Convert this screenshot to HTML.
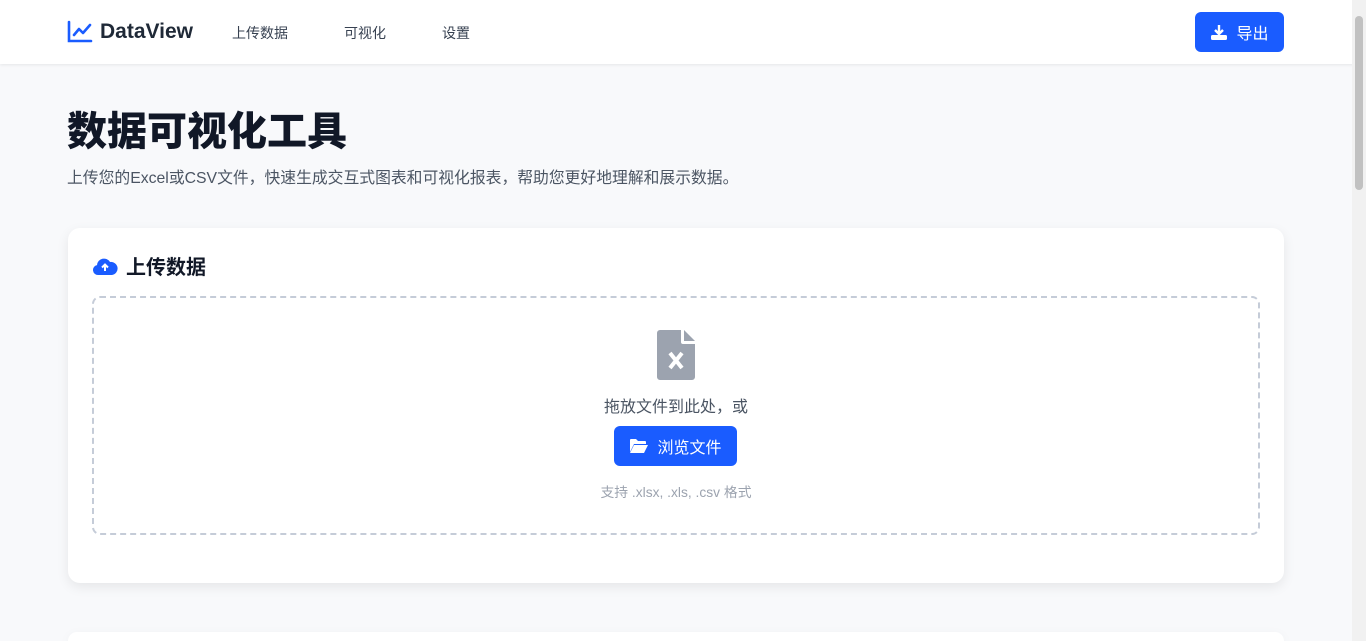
<!DOCTYPE html>
<html><head><meta charset="utf-8"><style>
*{box-sizing:border-box;margin:0;padding:0}
html,body{width:1366px;height:641px;overflow:hidden}
body{background:#f8f9fb;font-family:"Liberation Sans","Noto Sans CJK SC",sans-serif;color:#1f2937;position:relative}
.nav{position:absolute;left:0;top:0;width:1354px;height:64px;background:#fff;box-shadow:0 1px 3px rgba(0,0,0,.08)}
.logo{position:absolute;left:67px;top:20px;display:flex;align-items:center;font-weight:bold;font-size:21px;color:#1f2937}
.nav a{position:absolute;top:23px;font-size:14px;color:#374151}
.exp{position:absolute;left:1195px;top:12px;width:89px;height:40px;background:#1a5cff;border-radius:6px;color:#fff;font-size:16px;display:flex;align-items:center;justify-content:center;gap:8px}
h1{position:absolute;left:67px;top:99px;font-size:40px;font-weight:900;color:#111827}
.sub{position:absolute;left:67px;top:165px;font-size:15.8px;color:#4b5563;white-space:nowrap}
.card{position:absolute;left:68px;top:228px;width:1216px;height:355px;background:#fff;border-radius:12px;box-shadow:0 4px 12px rgba(0,0,0,.08)}
.card2{position:absolute;left:68px;top:632px;width:1216px;height:9px;background:#fff;border-radius:12px 12px 0 0;box-shadow:0 4px 12px rgba(0,0,0,.06)}
.ct{position:absolute;left:24px;top:23px;font-size:20px;font-weight:bold;display:flex;align-items:center;gap:8px;color:#111827}
.drop{position:absolute;left:24px;top:68px;width:1168px;height:239px;border:2px dashed #c5ccd8;border-radius:8px;text-align:center}
.btn{position:absolute;left:520px;top:128px;width:123px;height:40px;background:#1a5cff;border-radius:6px;color:#fff;font-size:16px;display:flex;align-items:center;justify-content:center;gap:8px}
.sb{position:absolute;right:3px;top:16px;width:8px;height:174px;background:#c1c1c1;border-radius:4px}
.sbt{position:absolute;right:0;top:0;width:14px;height:641px;background:#f1f1f1}
</style></head><body>
<div class="nav">
<div class="logo"><svg width="26" height="24" viewBox="0 0 26 24" style="margin-right:7px"><path d="M2 2V21H24" fill="none" stroke="#1a5cff" stroke-width="2.6" stroke-linecap="round"/><path d="M7 15l5-6 4 4 7-8" fill="none" stroke="#1a5cff" stroke-width="2.6" stroke-linecap="round" stroke-linejoin="round"/></svg>DataView</div>
<a style="left:232px">上传数据</a><a style="left:344px">可视化</a><a style="left:442px">设置</a>
<div class="exp"><svg width="18" height="17" viewBox="0 0 18 17"><path d="M9 1v9M5 6l4 4 4-4" stroke="#fff" stroke-width="2.4" fill="none"/><rect x="1" y="11" width="16" height="5" rx="1.5" fill="#fff"/></svg>导出</div>
</div>
<h1>数据可视化工具</h1>
<div class="sub">上传您的Excel或CSV文件，快速生成交互式图表和可视化报表，帮助您更好地理解和展示数据。</div>
<div class="card">
<div class="ct"><svg width="26" height="20" viewBox="0 0 26 20"><path d="M6 19a5 5 0 0 1-1-9.9A7 7 0 0 1 18 6a5.5 5.5 0 0 1 2 13z" fill="#1a5cff"/><path d="M13 15V9M10 11.5l3-3 3 3" stroke="#fff" stroke-width="2" fill="none"/></svg>上传数据</div>
<div class="drop">
<svg style="position:absolute;left:563px;top:32px" width="38" height="50" viewBox="0 0 38 50"><path d="M3 0h21v12a2 2 0 0 0 2 2h12v33a3 3 0 0 1-3 3H3a3 3 0 0 1-3-3V3a3 3 0 0 1 3-3zM27 0l11 11H27z" fill="#9ca3af"/><path d="M13 23l12 15M25 23L13 38" stroke="#fff" stroke-width="4"/></svg>
<div style="position:absolute;left:0;right:0;top:95px;font-size:16px;color:#4b5563">拖放文件到此处，或</div>
<div class="btn"><svg width="20" height="16" viewBox="0 0 20 16"><path d="M1 2a1 1 0 0 1 1-1h5l2 2h7a1 1 0 0 1 1 1v2H5L1 14z" fill="#fff"/><path d="M5 7h14l-4 8H1z" fill="#fff"/></svg>浏览文件</div>
<div style="position:absolute;left:0;right:0;top:183px;font-size:13.8px;color:#9ca3af">支持 .xlsx, .xls, .csv 格式</div>
</div>
</div>
<div class="card2"></div>
<div class="sbt"></div><div class="sb"></div>
</body></html>
